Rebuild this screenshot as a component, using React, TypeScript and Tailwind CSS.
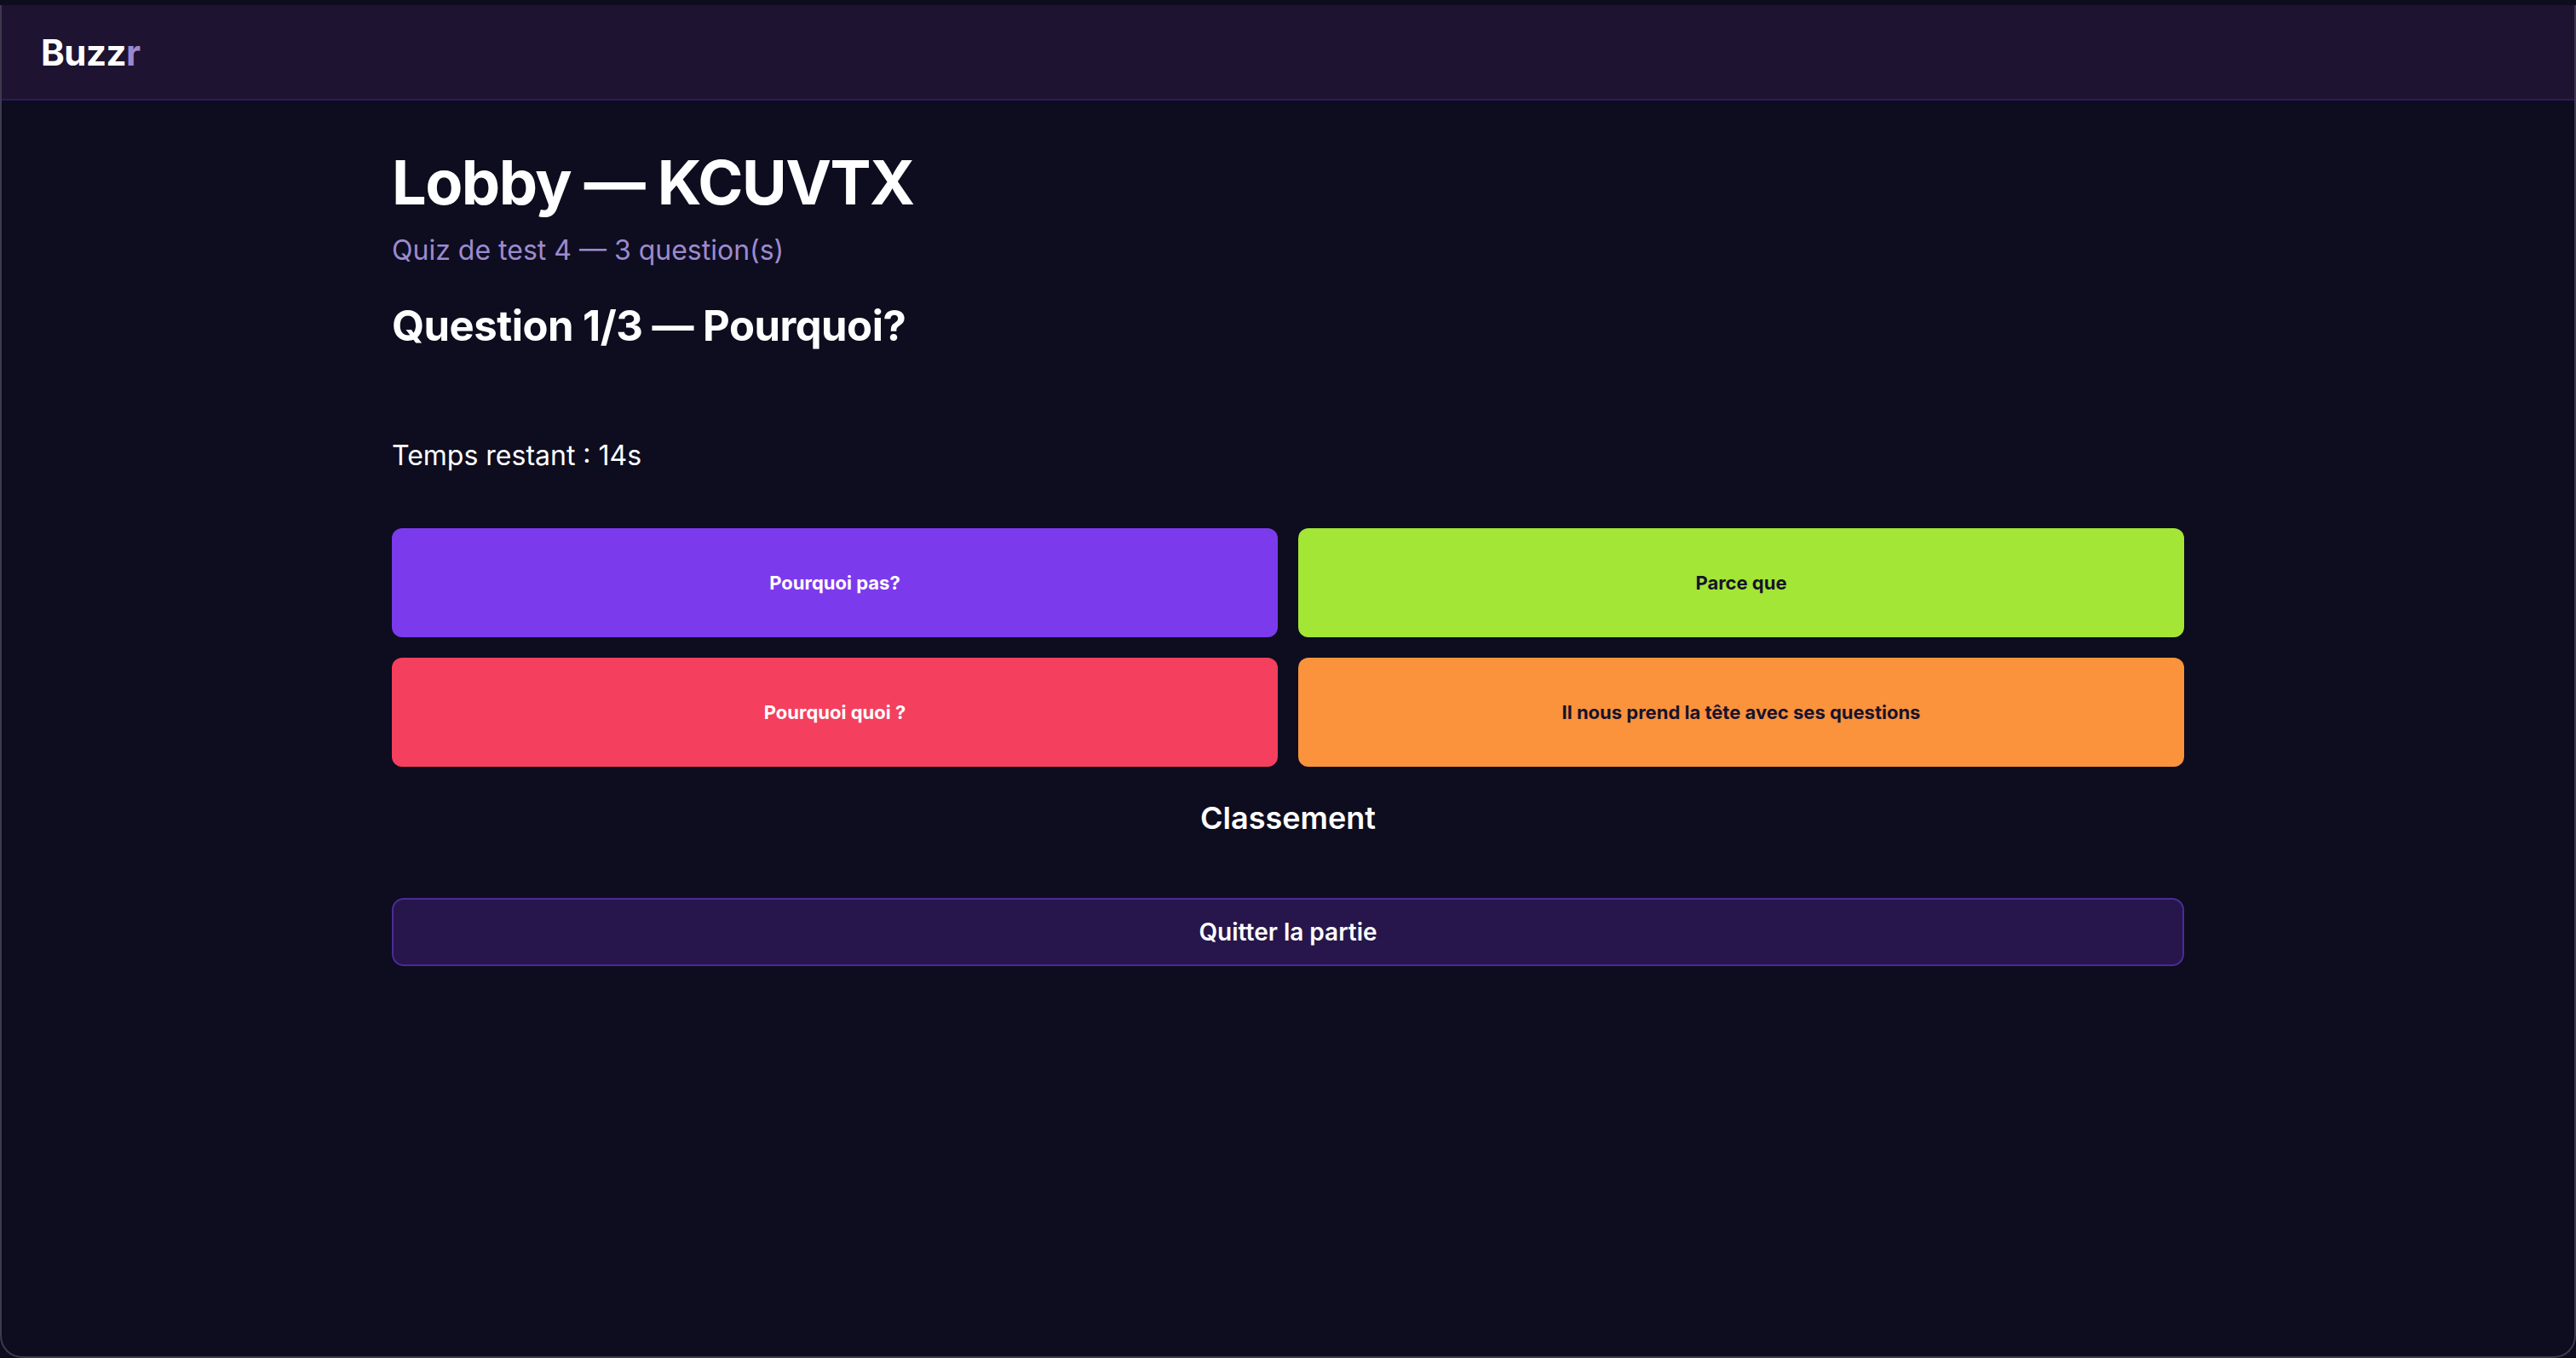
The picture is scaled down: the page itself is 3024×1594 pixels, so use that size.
import React from 'react';

const answers = [
  { label: 'Pourquoi pas?', cls: 'bg-[#7c3aed] text-white' },
  { label: 'Parce que', cls: 'bg-[#a3e635] text-[#17132b]' },
  { label: 'Pourquoi quoi ?', cls: 'bg-[#f43f5e] text-white' },
  { label: 'Il nous prend la tête avec ses questions', cls: 'bg-[#fb923c] text-[#17132b]' },
];

const App: React.FC = () => {
  return (
    <div className="w-[3024px] h-[1594px] bg-[#0d0d1f] pt-[6px] font-['Inter',sans-serif] overflow-hidden">
      <div className="h-full flex flex-col border-x-2 border-b-2 border-[#3d3a4e] rounded-b-[26px] overflow-hidden">
        {/* Header */}
        <header className="h-[112px] shrink-0 bg-[#1e1330] border-b-2 border-[#2d1b5c] flex items-center px-[46px]">
          <span className="text-[42px] font-bold text-white tracking-[-0.5px]">
            Buzz<span className="text-[#9b88cc]">r</span>
          </span>
        </header>

        {/* Main */}
        <main className="w-[2104px] mx-auto pt-[56px]">
          <h1 className="text-[72px] leading-[80px] font-bold text-white tracking-[-1.5px]">Lobby — KCUVTX</h1>
          <p className="text-[32px] leading-[48px] text-[#9d8ad0] mt-[16px]">Quiz de test 4 — 3 question(s)</p>

          <h2 className="text-[49px] leading-[64px] font-bold text-white mt-[33px] tracking-[-0.5px]">Question 1/3 — Pourquoi?</h2>

          <p className="text-[32px] leading-[48px] text-white mt-[96px]">Temps restant : 14s</p>

          <div className="grid grid-cols-2 gap-[24px] mt-[61px]">
            {answers.map((a) => (
              <button
                key={a.label}
                className={`h-[128px] rounded-[12px] text-[22px] font-bold flex items-center justify-center ${a.cls}`}
              >
                {a.label}
              </button>
            ))}
          </div>

          <h3 className="text-[36px] leading-[56px] font-semibold text-white text-center mt-[32px]">Classement</h3>

          <button className="w-full h-[80px] mt-[66px] rounded-[14px] bg-[#27164b] border-2 border-[#4b2a99] text-white text-[28px] font-semibold">
            Quitter la partie
          </button>
        </main>
      </div>
    </div>
  );
};

export default App;
